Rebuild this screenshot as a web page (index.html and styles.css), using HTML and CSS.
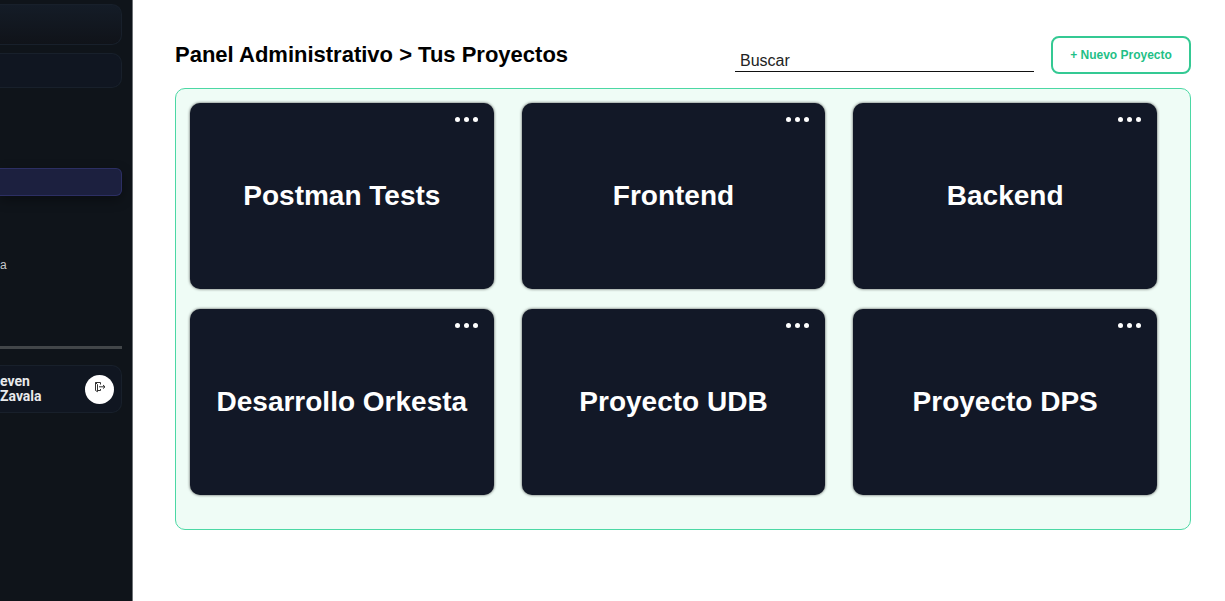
FILE: index.html
```html
<!DOCTYPE html>
<html lang="es">
<head>
<meta charset="utf-8">
<meta name="viewport" content="width=device-width, initial-scale=1">
<title>Tus Proyectos</title>
<link rel="stylesheet" href="styles.css">
</head>
<body>
<div class="app">
  <aside class="sidebar">
    <div class="side-box side-brand"></div>
    <div class="side-box side-search"></div>
    <nav class="side-nav">
      <div class="side-active"></div>
      <a class="side-link" href="#">a</a>
    </nav>
    <hr class="side-rule">
    <div class="side-box profile">
      <p class="profile-name">even<br>Zavala</p>
      <button class="logout" type="button" aria-label="Salir">
        <svg class="logout-icon" viewBox="0 0 12 12" aria-hidden="true"><path d="M6.5 3.5V1.5h-5v8l2 1.2V3.5l-2-2M3.5 9.5h3V8M5 5.8h6M9 4l2 1.8L9 7.6"/></svg>
      </button>
    </div>
  </aside>
  <main class="main">
    <header class="header">
      <h1 class="title">Panel Administrativo &gt; Tus Proyectos</h1>
      <input class="search" type="text" placeholder="Buscar" aria-label="Buscar">
      <button class="new-project" type="button">+ Nuevo Proyecto</button>
    </header>
    <section class="projects">
      <article class="card"><button class="menu" type="button" aria-label="Opciones"><span class="dot"></span><span class="dot"></span><span class="dot"></span></button><h2 class="card-title">Postman Tests</h2></article>
      <article class="card"><button class="menu" type="button" aria-label="Opciones"><span class="dot"></span><span class="dot"></span><span class="dot"></span></button><h2 class="card-title">Frontend</h2></article>
      <article class="card"><button class="menu" type="button" aria-label="Opciones"><span class="dot"></span><span class="dot"></span><span class="dot"></span></button><h2 class="card-title">Backend</h2></article>
      <article class="card"><button class="menu" type="button" aria-label="Opciones"><span class="dot"></span><span class="dot"></span><span class="dot"></span></button><h2 class="card-title">Desarrollo Orkesta</h2></article>
      <article class="card"><button class="menu" type="button" aria-label="Opciones"><span class="dot"></span><span class="dot"></span><span class="dot"></span></button><h2 class="card-title">Proyecto UDB</h2></article>
      <article class="card"><button class="menu" type="button" aria-label="Opciones"><span class="dot"></span><span class="dot"></span><span class="dot"></span></button><h2 class="card-title">Proyecto DPS</h2></article>
    </section>
  </main>
</div>
</body>
</html>
```
FILE: styles.css
```css
* {
  box-sizing: border-box;
}

body {
  margin: 0;
  background: #fff;
  color: #000;
  font-family: "Liberation Sans", Arial, sans-serif;
}

button {
  font-family: inherit;
  cursor: pointer;
}

.app {
  display: flex;
  min-height: 100vh;
}

.sidebar {
  flex: 0 0 133px;
  display: flex;
  flex-direction: column;
  padding: 4px 10px 0 0;
  background: #0f141a;
  border-right: 1px solid #6f7377;
}

.side-box {
  border: 1px solid #18202b;
  border-left: 0;
  border-radius: 0 10px 10px 0;
  background: #101621;
}

.side-brand {
  height: 41px;
  background: linear-gradient(#141c27, #101319);
}

.side-search {
  height: 35px;
  margin-top: 8px;
}

.side-nav {
  padding: 80px 0 73px;
}

.side-active {
  height: 28px;
  border: 1px solid #2c2f63;
  border-left: 0;
  border-radius: 0 6px 6px 0;
  background: #1c203f;
  box-shadow: 0 4px 12px rgba(0, 0, 0, 0.35);
}

.side-link {
  display: block;
  margin-top: 61px;
  color: #c6c8ca;
  font-size: 12px;
  line-height: 16px;
  text-decoration: none;
}

.side-rule {
  width: 100%;
  height: 3px;
  margin: 0 0 16px;
  border: 0;
  background: #424649;
}

.profile {
  display: flex;
  align-items: center;
  justify-content: space-between;
  height: 48px;
  padding-right: 7px;
}

.profile-name {
  margin: 0;
  color: #e8eaec;
  font-family: Roboto, sans-serif;
  font-size: 14px;
  font-weight: 700;
  line-height: 15px;
}

.logout {
  display: flex;
  align-items: flex-start;
  justify-content: center;
  width: 29px;
  height: 29px;
  padding: 6px 0 0;
  border: 0;
  border-radius: 50%;
  background: #fff;
}

.logout-icon {
  width: 12px;
  height: 12px;
  fill: none;
  stroke: #333;
  stroke-width: 1;
}

.main {
  flex: 1;
  min-width: 0;
  padding: 36px 34px 0 42px;
}

.header {
  display: flex;
  align-items: center;
}

.title {
  flex: 1;
  margin: 0;
  font-size: 22px;
  line-height: 28px;
}

.search {
  align-self: flex-end;
  width: 299px;
  height: 24px;
  margin: 0 17px 2px 0;
  padding: 2px 4px 0 5px;
  border: 0;
  border-bottom: 1px solid #111;
  background: transparent;
  font-family: inherit;
  font-size: 16px;
}

.search::placeholder {
  color: #222;
}

.new-project {
  width: 140px;
  height: 38px;
  padding: 0;
  border: 2px solid #34c993;
  border-radius: 8px;
  background: #fff;
  color: #1fbf87;
  font-size: 12px;
  font-weight: 700;
}

.projects {
  display: grid;
  grid-template-columns: repeat(3, 1fr);
  gap: 20px 28px;
  margin-top: 14px;
  padding: 14px 33px 34px 14px;
  border: 1px solid #4bd8a4;
  border-radius: 10px;
  background: #effcf6;
}

.card {
  position: relative;
  display: flex;
  align-items: center;
  justify-content: center;
  height: 186px;
  border-radius: 10px;
  background: #121827;
  box-shadow: 0 0 3px rgba(0, 0, 0, 0.7);
}

.card-title {
  margin: 0;
  color: #fff;
  font-size: 28px;
  line-height: 34px;
}

.menu {
  position: absolute;
  top: 8px;
  right: 16px;
  display: flex;
  align-items: center;
  gap: 4px;
  height: 16px;
  padding: 0;
  border: 0;
  background: transparent;
}

.dot {
  width: 5px;
  height: 5px;
  border-radius: 50%;
  background: #fff;
}
```
